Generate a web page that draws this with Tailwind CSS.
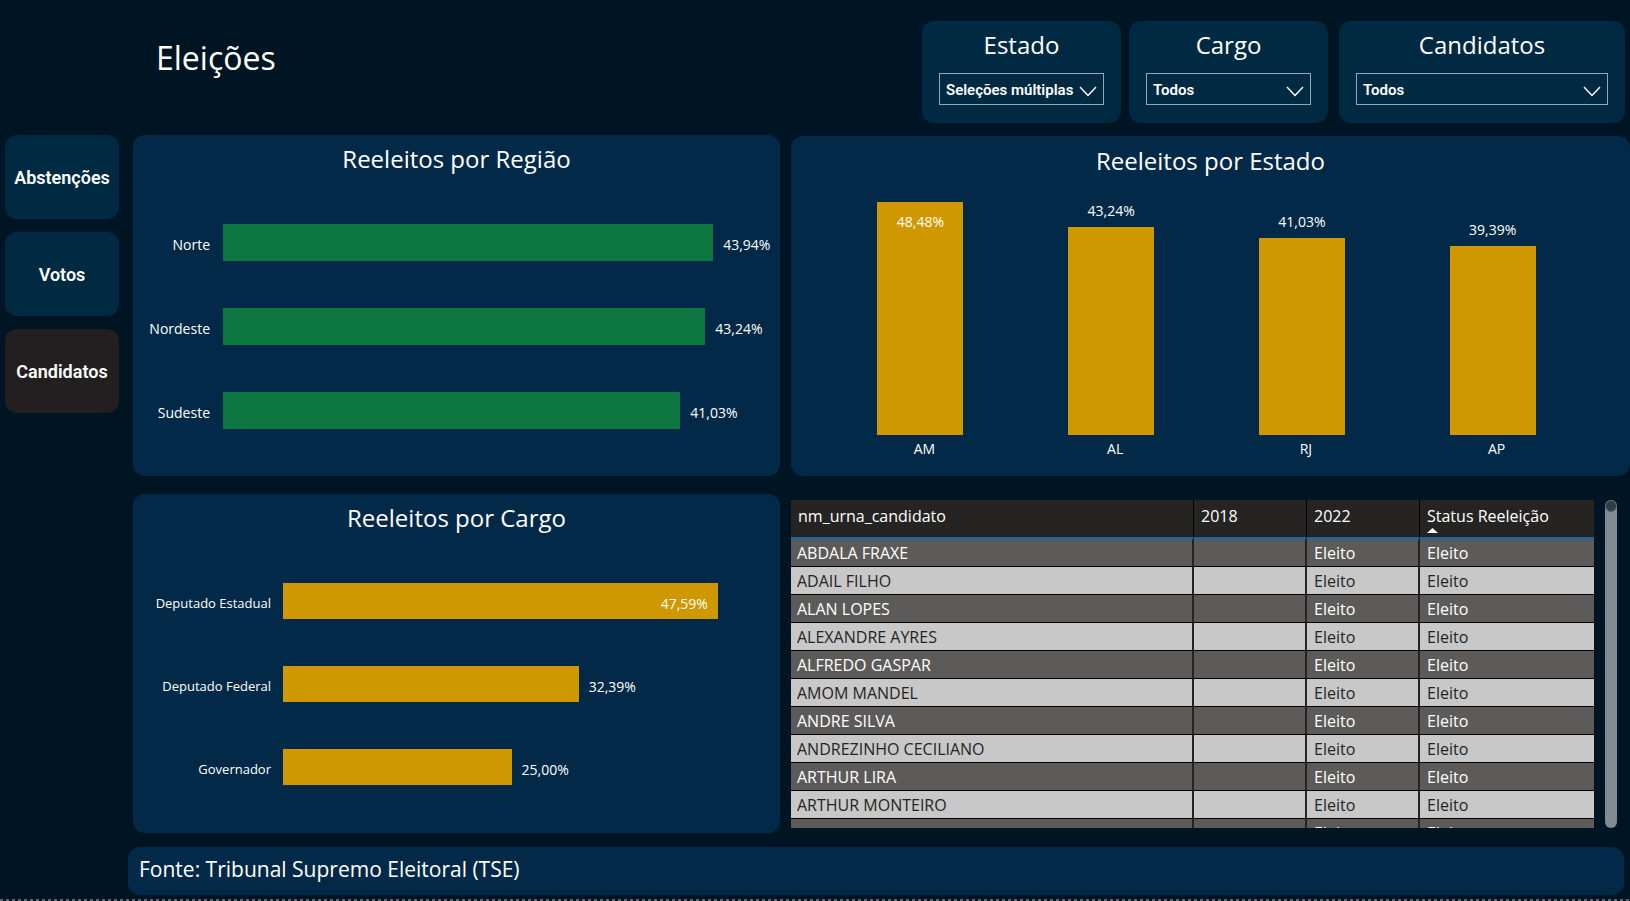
<!DOCTYPE html>
<html lang="pt-BR">
<head>
<meta charset="utf-8">
<title>Eleições</title>
<script src="https://cdn.jsdelivr.net/npm/@tailwindcss/browser@4"></script>
</head>
<body class="bg-[#001523] text-white font-['Open_Sans','Noto_Sans',sans-serif] overflow-hidden">
<div class="min-h-screen flex flex-col">

  <header class="flex items-start justify-between pl-[156px] pr-[5px] pt-[21px] h-[135px]">
    <h1 class="text-[32px] leading-[44px] pt-[15px]">Eleições</h1>
    <form class="flex h-[102px] w-[703px]">
      <div class="w-[199px] rounded-xl bg-[#002942] px-[17px] mr-2">
        <label for="estado" class="block text-center text-2xl leading-[32px] pt-2">Estado</label>
        <div class="relative mt-3">
          <select id="estado" class="appearance-none block w-full h-8 border border-[#9aa7b0] bg-transparent pt-[2px] pl-[6px] pr-6 font-['Roboto',sans-serif] font-semibold text-[15px] text-white"><option>Seleções múltiplas</option></select>
          <svg class="absolute right-[7px] top-[13px] pointer-events-none" width="18" height="11" viewBox="0 0 18 11" fill="none" stroke="#fff" stroke-width="1.4"><path d="M1 1l8 8.500 8-8.500"/></svg>
        </div>
      </div>
      <div class="w-[199px] rounded-xl bg-[#002942] px-[17px] mr-[11px]">
        <label for="cargo" class="block text-center text-2xl leading-[32px] pt-2">Cargo</label>
        <div class="relative mt-3">
          <select id="cargo" class="appearance-none block w-full h-8 border border-[#9aa7b0] bg-transparent pt-[2px] pl-[6px] pr-6 font-['Roboto',sans-serif] font-semibold text-[15px] text-white"><option>Todos</option></select>
          <svg class="absolute right-[7px] top-[13px] pointer-events-none" width="18" height="11" viewBox="0 0 18 11" fill="none" stroke="#fff" stroke-width="1.4"><path d="M1 1l8 8.500 8-8.500"/></svg>
        </div>
      </div>
      <div class="flex-1 rounded-xl bg-[#002942] px-[17px]">
        <label for="candidatos" class="block text-center text-2xl leading-[32px] pt-2">Candidatos</label>
        <div class="relative mt-3">
          <select id="candidatos" class="appearance-none block w-full h-8 border border-[#9aa7b0] bg-transparent pt-[2px] pl-[6px] pr-6 font-['Roboto',sans-serif] font-semibold text-[15px] text-white"><option>Todos</option></select>
          <svg class="absolute right-[7px] top-[13px] pointer-events-none" width="18" height="11" viewBox="0 0 18 11" fill="none" stroke="#fff" stroke-width="1.4"><path d="M1 1l8 8.500 8-8.500"/></svg>
        </div>
      </div>
    </form>
  </header>

  <div class="flex">
    <nav class="w-[114px] ml-[5px] mr-[14px] flex flex-col gap-[13px] font-['Roboto',sans-serif] font-semibold text-lg">
      <button class="h-21 pt-[2px] rounded-xl bg-[#002942]">Abstenções</button>
      <button class="h-21 pt-[2px] rounded-xl bg-[#002942]">Votos</button>
      <button class="h-21 pt-[2px] rounded-xl bg-[#231f20]">Candidatos</button>
    </nav>

    <main class="flex-1 grid grid-cols-[647fr_839fr] gap-x-[11px]">
      <div class="flex flex-col gap-[18px]">
        <section class="h-[341px] rounded-xl bg-[#022a48]">
          <h2 class="text-center text-2xl leading-[32px] pt-2">Reeleitos por Região</h2>
          <div class="mt-[49px] flex flex-col gap-[47px] text-sm [&_span]:pt-[5px]">
            <div class="flex items-center h-[37px]"><span class="w-[90px] pr-[13px] text-right">Norte</span><div class="flex-1 flex items-center"><div class="h-[37px] shrink-0 bg-[#0d7742]" style="width:88%"></div><span class="ml-[10px]">43,94%</span></div></div>
            <div class="flex items-center h-[37px]"><span class="w-[90px] pr-[13px] text-right">Nordeste</span><div class="flex-1 flex items-center"><div class="h-[37px] shrink-0 bg-[#0d7742]" style="width:86.6%"></div><span class="ml-[10px]">43,24%</span></div></div>
            <div class="flex items-center h-[37px]"><span class="w-[90px] pr-[13px] text-right">Sudeste</span><div class="flex-1 flex items-center"><div class="h-[37px] shrink-0 bg-[#0d7742]" style="width:82.1%"></div><span class="ml-[10px]">41,03%</span></div></div>
          </div>
        </section>

        <section class="h-[339px] rounded-xl bg-[#022a48]">
          <h2 class="text-center text-2xl leading-[32px] pt-2">Reeleitos por Cargo</h2>
          <div class="mt-[49px] flex flex-col gap-[47px] text-sm [&_span]:pt-[5px]">
            <div class="flex items-center h-9"><span class="w-[150px] pr-3 text-right text-[13px]">Deputado Estadual</span><div class="flex-1 flex items-center"><div class="h-9 shrink-0 bg-[#cf9700] flex items-center justify-end pr-[10px]" style="width:87.5%"><span>47,59%</span></div></div></div>
            <div class="flex items-center h-9"><span class="w-[150px] pr-3 text-right text-[13px]">Deputado Federal</span><div class="flex-1 flex items-center"><div class="h-9 shrink-0 bg-[#cf9700]" style="width:59.5%"></div><span class="ml-[10px]">32,39%</span></div></div>
            <div class="flex items-center h-9"><span class="w-[150px] pr-3 text-right text-[13px]">Governador</span><div class="flex-1 flex items-center"><div class="h-9 shrink-0 bg-[#cf9700]" style="width:46%"></div><span class="ml-[10px]">25,00%</span></div></div>
          </div>
        </section>
      </div>

      <div class="pt-px">
        <section class="h-[340px] rounded-xl bg-[#022a48]">
          <h2 class="text-center text-2xl leading-[32px] pt-[9px]">Reeleitos por Estado</h2>
          <div class="mt-6 h-[233px] pl-[34px] pr-[42px] grid grid-cols-4 items-end text-sm text-center">
            <div class="flex flex-col items-center"><div class="w-[86px] bg-[#cf9700] pt-[10px]" style="height:233px">48,48%</div></div>
            <div class="flex flex-col items-center"><span class="mb-[6px]">43,24%</span><div class="w-[86px] bg-[#cf9700]" style="height:208px"></div></div>
            <div class="flex flex-col items-center"><span class="mb-[6px]">41,03%</span><div class="w-[86px] bg-[#cf9700]" style="height:197px"></div></div>
            <div class="flex flex-col items-center"><span class="mb-[6px]">39,39%</span><div class="w-[86px] bg-[#cf9700]" style="height:189px"></div></div>
          </div>
          <div class="mt-[5px] px-[38px] grid grid-cols-4 text-sm text-center"><span>AM</span><span>AL</span><span>RJ</span><span>AP</span></div>
        </section>

        <section class="mt-6 flex gap-[11px] h-[328px] pr-[13px]">
          <div class="flex-1 overflow-hidden">
            <table class="w-full table-fixed border-separate border-spacing-0 text-base text-left [&_th]:font-normal [&_th]:align-top [&_th]:leading-6 [&_th]:pt-1 [&_th]:px-[7px] [&_th]:border-b-2 [&_th]:border-b-[#1466b8] [&_th:not(:last-child)]:border-r [&_th]:border-r-black [&_td]:h-7 [&_td]:leading-[25px] [&_td]:pt-[2px] [&_td]:pb-0 [&_td]:px-[7px] [&_td:first-child]:pl-[6px] [&_td]:border-b [&_td]:border-b-black [&_td:not(:last-child)]:border-r-2 [&_td]:border-r-[#222522]">
              <colgroup><col><col class="w-[113px]"><col class="w-[113px]"><col class="w-[174px]"></colgroup>
              <thead class="bg-[#252423]"><tr class="h-[39px]"><th>nm_urna_candidato</th><th>2018</th><th>2022</th><th>Status Reeleição<svg class="block" width="11" height="5" viewBox="0 0 11 5"><path d="M0 5L5.500 0 11 5z" fill="#fff"/></svg></th></tr></thead>
              <tbody class="[&>tr:nth-child(odd)]:bg-[#5c5b59] [&>tr:nth-child(even)]:bg-[#c8c8c8] [&>tr:nth-child(even)]:text-[#252423]">
                <tr><td>ABDALA FRAXE</td><td></td><td>Eleito</td><td>Eleito</td></tr>
                <tr><td>ADAIL FILHO</td><td></td><td>Eleito</td><td>Eleito</td></tr>
                <tr><td>ALAN LOPES</td><td></td><td>Eleito</td><td>Eleito</td></tr>
                <tr><td>ALEXANDRE AYRES</td><td></td><td>Eleito</td><td>Eleito</td></tr>
                <tr><td>ALFREDO GASPAR</td><td></td><td>Eleito</td><td>Eleito</td></tr>
                <tr><td>AMOM MANDEL</td><td></td><td>Eleito</td><td>Eleito</td></tr>
                <tr><td>ANDRE SILVA</td><td></td><td>Eleito</td><td>Eleito</td></tr>
                <tr><td>ANDREZINHO CECILIANO</td><td></td><td>Eleito</td><td>Eleito</td></tr>
                <tr><td>ARTHUR LIRA</td><td></td><td>Eleito</td><td>Eleito</td></tr>
                <tr><td>ARTHUR MONTEIRO</td><td></td><td>Eleito</td><td>Eleito</td></tr>
                <tr><td></td><td></td><td>Eleito</td><td>Eleito</td></tr>
              </tbody>
            </table>
          </div>
          <div class="w-3 rounded-full bg-[#808a93]"><div class="size-3 rounded-full bg-[#2f3d46] border border-[#5c6972]"></div></div>
        </section>
      </div>
    </main>
  </div>

  <footer class="mt-[14px] ml-32 mr-[6px] h-12 rounded-xl bg-[#022a48] px-[11px] text-[21px] leading-[44px]">Fonte: Tribunal Supremo Eleitoral (TSE)</footer>
  <div class="mt-1 h-[2px] bg-[repeating-linear-gradient(90deg,#5f676c_0_3px,transparent_3px_6px)]"></div>
</div>
</body>
</html>
